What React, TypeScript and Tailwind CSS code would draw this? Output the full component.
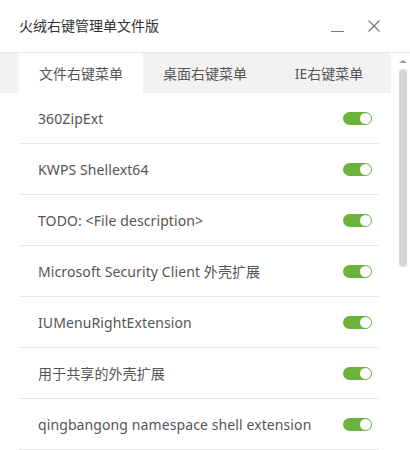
import { useState } from "react"

const TABS = ['文件右键菜单', '桌面右键菜单', 'IE右键菜单']

const ITEMS = [
    '360ZipExt',
    'KWPS Shellext64',
    'TODO: <File description>',
    'Microsoft Security Client 外壳扩展',
    'IUMenuRightExtension',
    '用于共享的外壳扩展',
    'qingbangong namespace shell extension',
]

const Toggle = ({ on }: { on: boolean }) => (
    <div className={`flex h-[13px] w-[29px] items-center rounded-full px-[1px] ${on ? 'justify-end bg-[#6cb33e]' : 'justify-start bg-[#cccccc]'}`}>
        <div className="h-[11px] w-[11px] rounded-full bg-white" />
    </div>
)

export default function App() {
    const [active, setActive] = useState(0)
    const [states, setStates] = useState(ITEMS.map(() => true))

    return <div className="flex h-[450px] w-[410px] flex-col overflow-hidden bg-white text-[14px] text-[#555]" style={{ fontFamily: '"Noto Sans", "Noto Sans CJK SC", sans-serif' }}>
        {/* title bar */}
        <div className="flex h-[53px] items-center border-b border-[#e8e8e8] pl-[19px] pr-[30px]">
            <span className="flex-1 pb-[2px] text-[#333]">火绒右键管理单文件版</span>
            <button type="button" className="mr-[24px] flex h-[20px] w-[13px] items-end pb-[4px]">
                <div className="h-[1px] w-[13px] bg-[#777]" />
            </button>
            <button type="button" className="text-[#777]">
                <svg width="12" height="12" viewBox="0 0 12 12" stroke="currentColor" strokeWidth="1.2">
                    <path d="M0.5 0.5L11.5 11.5M11.5 0.5L0.5 11.5" />
                </svg>
            </button>
        </div>

        <div className="flex min-h-0 flex-1">
            <div className="flex w-[391px] flex-col">
                {/* tabs */}
                <div className="flex h-[40px] bg-[#f2f2f2] pl-[19px]">
                    {TABS.map((tab, i) => (
                        <button
                            key={tab}
                            type="button"
                            onClick={() => setActive(i)}
                            className={`flex w-[124px] items-center justify-center ${i === active ? 'bg-white' : ''}`}
                        >
                            {tab}
                        </button>
                    ))}
                </div>

                {/* list */}
                <div className="flex flex-col px-[19px] pr-[12px]">
                    {ITEMS.map((item, i) => (
                        <div key={item} className="flex h-[51px] shrink-0 items-center justify-between border-b border-[#e8e8e8] pl-[19px] pr-[7px]">
                            <span className="tracking-[0.1px]">{item}</span>
                            <button type="button" onClick={() => setStates(s => s.map((v, j) => j === i ? !v : v))}>
                                <Toggle on={states[i]} />
                            </button>
                        </div>
                    ))}
                </div>
            </div>

            {/* scrollbar */}
            <div className="flex w-[19px] flex-col items-center pt-[7px] pl-[4px]">
                <div className="h-0 w-0 border-x-[4px] border-b-[3px] border-x-transparent border-b-[#999]" />
                <div className="mt-[6px] h-[198px] w-[8px] rounded-full bg-[#d6d6d6]" />
            </div>
        </div>
    </div>
}
